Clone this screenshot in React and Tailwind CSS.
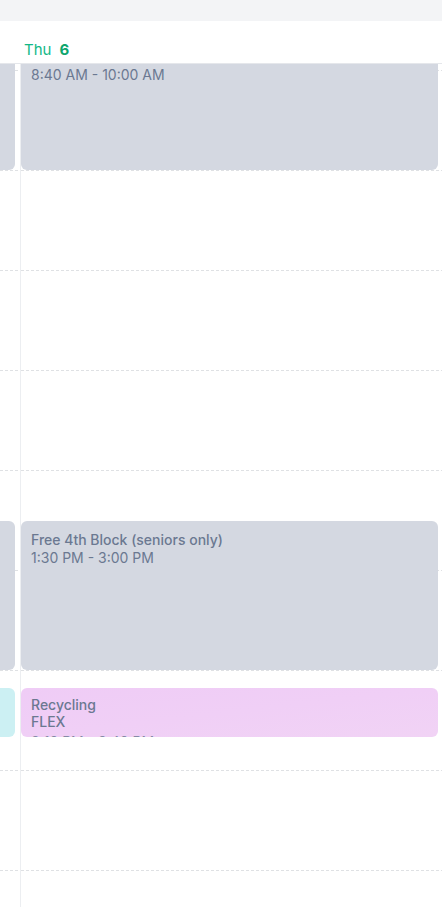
const HOUR_HEIGHT = 100;
const DAY_START = 8 * 60;
const HOURS = [8, 9, 10, 11, 12, 13, 14, 15, 16, 17];

const toY = (time) => {
  const [h, m] = time.split(":").map(Number);
  return ((h * 60 + m - DAY_START) / 60) * HOUR_HEIGHT;
};

const COLORS = {
  gray: "bg-[#d4d8e1]",
  cyan: "bg-[#ccf0f3]",
  pink: "bg-linear-to-br from-[#efccf6] via-[#f0cff6] to-[#f1d3f5]",
};

const wednesday = [
  { id: "w1", start: "8:40", end: "10:00", color: "gray" },
  { id: "w2", start: "13:30", end: "15:00", color: "gray" },
  { id: "w3", start: "15:10", end: "15:40", color: "cyan" },
];

const thursday = [
  {
    id: "t1",
    title: "1st Block",
    time: "8:40 AM - 10:00 AM",
    start: "8:40",
    end: "10:00",
    color: "gray",
  },
  {
    id: "t2",
    title: "Free 4th Block (seniors only)",
    time: "1:30 PM - 3:00 PM",
    start: "13:30",
    end: "15:00",
    color: "gray",
  },
  {
    id: "t3",
    title: "Recycling",
    subtitle: "FLEX",
    time: "3:10 PM - 3:40 PM",
    start: "15:10",
    end: "15:40",
    color: "pink",
    compact: true,
  },
];

function HourSlots() {
  return HOURS.map((h) => (
    <div key={h} className="flex h-[100px] flex-col">
      <div className="h-px bg-[linear-gradient(to_right,#dfe1e4_3px,transparent_3px)] bg-[length:5px_1px]" />
    </div>
  ));
}

function EventCard({ event, edgeClass }) {
  const top = toY(event.start) + 1;
  const height = toY(event.end) - toY(event.start) - 1;
  const pad = event.compact ? "pt-2 leading-[17px]" : "pt-[10px] leading-[18px]";

  return (
    <div
      className={`absolute overflow-hidden rounded-md px-2.5 text-[14px] text-[#6b7891] ${pad} ${COLORS[event.color]} ${edgeClass}`}
      style={{ top, height }}
    >
      {event.title && <div className="font-medium">{event.title}</div>}
      {event.subtitle && <div className="font-medium">{event.subtitle}</div>}
      {event.time && (
        <div className={event.compact ? "pt-[3px] opacity-80" : ""}>{event.time}</div>
      )}
    </div>
  );
}

export default function App() {
  return (
    <div className="flex h-[907px] flex-col overflow-hidden bg-white font-['Inter','Noto_Sans',sans-serif]">
      <div className="h-[21px] shrink-0 bg-[#f3f4f6]" />

      <div className="flex h-[43px] shrink-0 items-end gap-2 border-b border-[#e5e7eb] pb-[3px] pl-6 text-[15px] leading-[20px] text-[#12b886]">
        <span>Thu</span>
        <span className="font-bold text-[#0ea66e]">6</span>
      </div>

      <div className="relative flex-1 overflow-hidden">
        <div className="-mt-[94px] flex">
          {/* tail of the previous day */}
          <div className="relative w-5 shrink-0">
            <HourSlots />
            {wednesday.map((ev) => (
              <EventCard key={ev.id} event={ev} edgeClass="right-[5px] w-[417px]" />
            ))}
          </div>

          <div className="relative w-[423px] shrink-0 border-l border-[#eceef1]">
            <HourSlots />
            {thursday.map((ev) => (
              <EventCard key={ev.id} event={ev} edgeClass="left-0 right-[5px]" />
            ))}
          </div>
        </div>
      </div>
    </div>
  );
}
